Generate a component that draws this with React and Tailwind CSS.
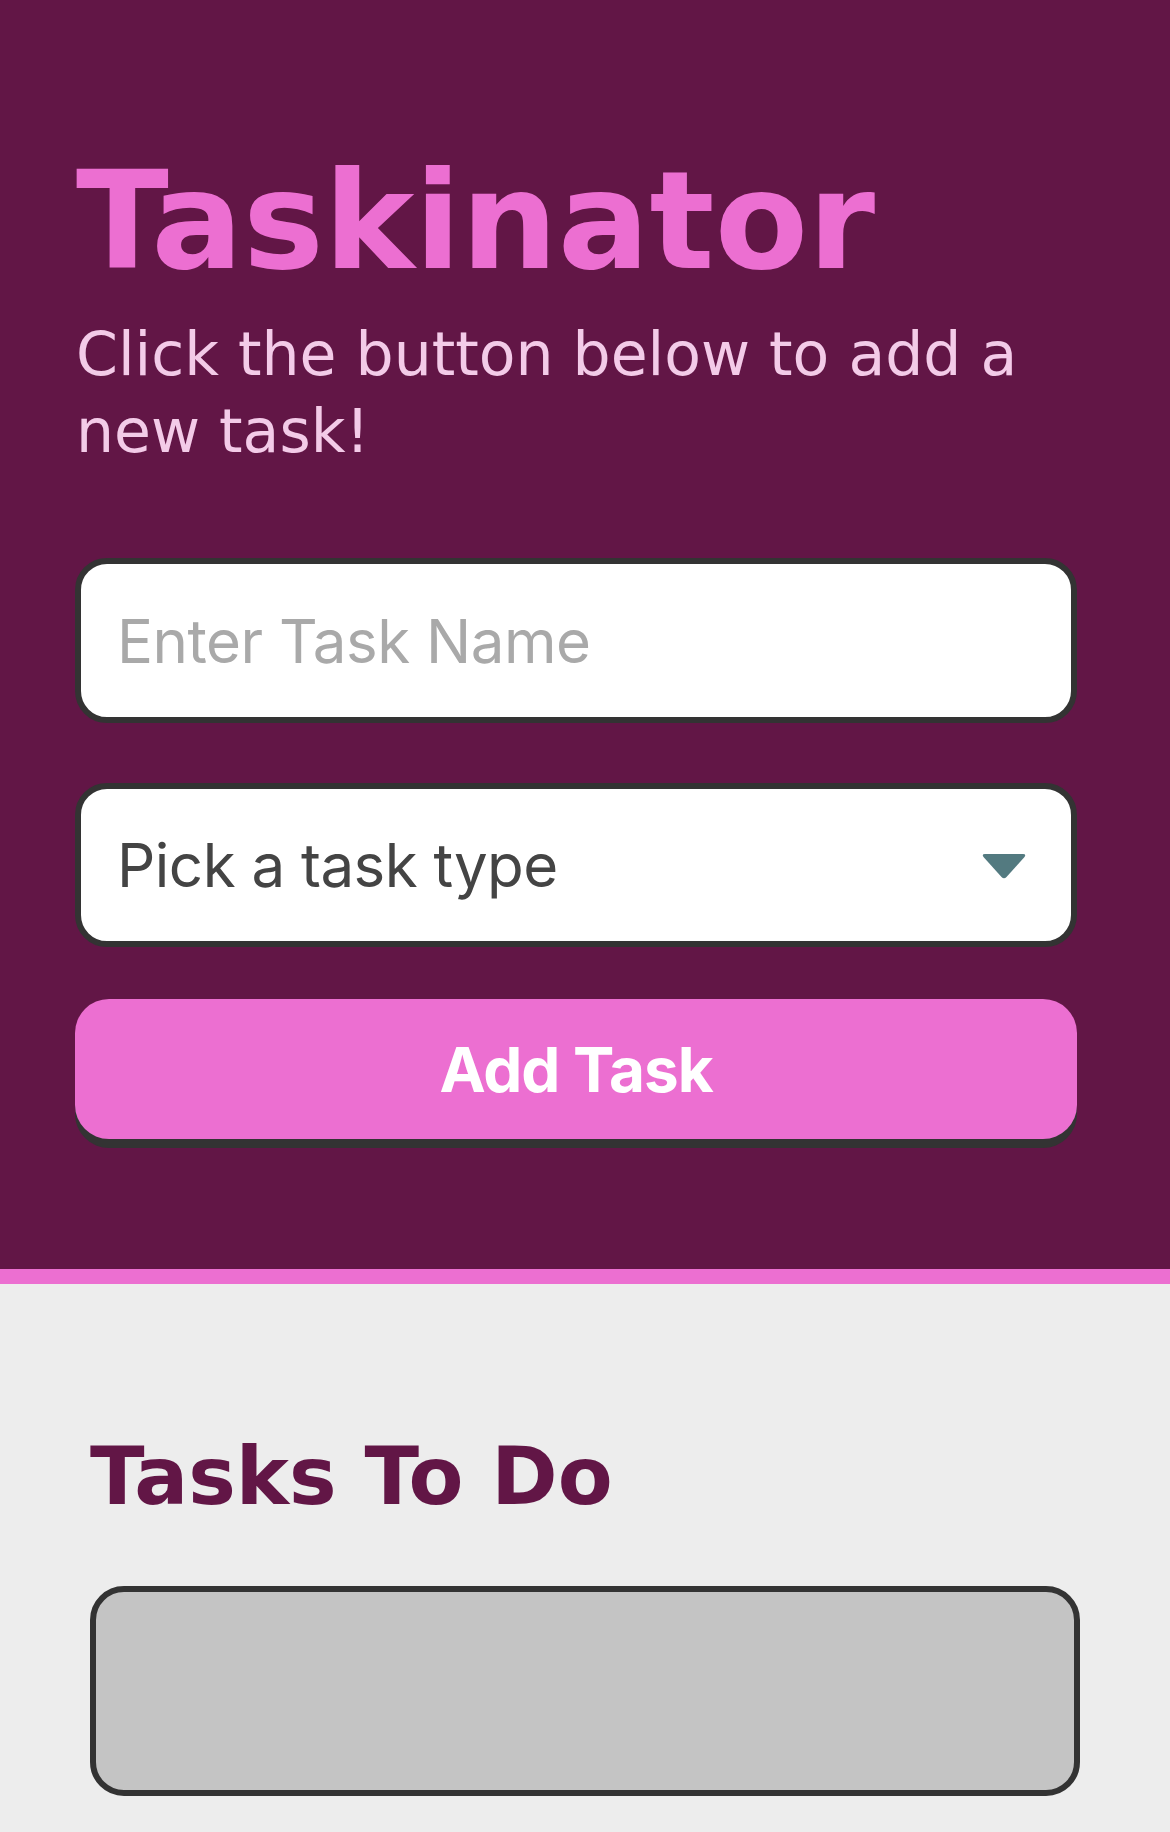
import React from "react";

export default function App() {
  return (
    <div className="w-[1170px] min-h-[1832px] bg-[#ededed]">
      <header className="bg-[#621646] pt-[154px] pb-[130px] pl-[75px] border-b-[15px] border-[#ec6fd1]">
        <h1 className="font-['DejaVu_Sans',sans-serif] font-bold text-[136px] leading-[134px] text-[#ec6fd1] pl-[1px]">
          Taskinator
        </h1>
        <p className="mt-[28px] w-[1000px] font-['DejaVu_Sans',sans-serif] text-[60px] leading-[77px] text-[#f3cbe8] pl-[1px]">
          Click the button below to add a new task!
        </p>
        <form className="mt-[88px] w-[1002px] flex flex-col font-['Inter',sans-serif]" onSubmit={(e) => e.preventDefault()}>
          <input
            type="text"
            placeholder="Enter Task Name"
            className="h-[165px] w-full bg-white border-[6px] border-[#333333] rounded-[32px] px-[36px] text-[60px] tracking-[-0.5px] text-[#444444] placeholder:text-[#a9a9a9] outline-none"
          />
          <div className="relative mt-[60px]">
            <select
              defaultValue=""
              className="appearance-none h-[164px] w-full bg-white border-[6px] border-[#333333] rounded-[32px] px-[36px] text-[60px] tracking-[-0.5px] text-[#444444] outline-none"
            >
              <option value="" disabled>
                Pick a task type
              </option>
              <option>Web</option>
              <option>Mobile</option>
              <option>Print</option>
            </select>
            <svg
              className="absolute right-[50px] top-[70px] pointer-events-none"
              width="46"
              height="26"
              viewBox="0 0 46 26"
            >
              <path d="M4 1 H42 Q45.5 1 43.5 4 L25.5 24 Q23 26.5 20.5 24 L2.5 4 Q0.5 1 4 1 Z" fill="#537a80" />
            </svg>
          </div>
          <button
            type="submit"
            className="mt-[52px] h-[140px] w-full bg-[#ec6fd1] rounded-[34px] shadow-[0_9px_0_#333333] text-white font-bold text-[62px] tracking-[-1px] flex items-center justify-center"
          >
            Add Task
          </button>
        </form>
      </header>
      <main className="pt-[154px] px-[90px] pb-[40px]">
        <h2 className="font-['DejaVu_Sans',sans-serif] font-bold text-[80px] leading-[78px] text-[#621646]">
          Tasks To Do
        </h2>
        <ul className="mt-[70px] h-[210px] bg-[#c4c4c4] border-[6px] border-[#333333] rounded-[34px]"></ul>
      </main>
    </div>
  );
}
